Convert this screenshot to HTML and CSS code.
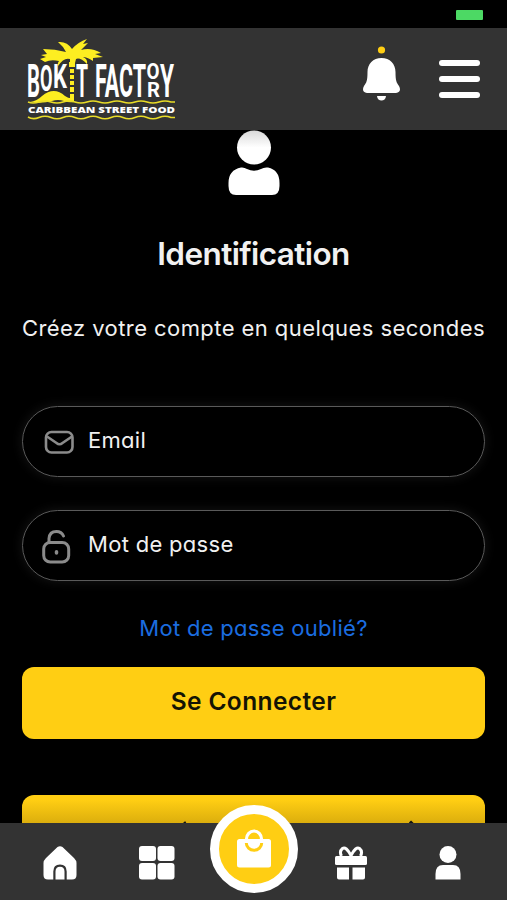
FILE: index.html
```html
<!DOCTYPE html>
<html lang="fr">
<head>
<meta charset="utf-8">
<meta name="viewport" content="width=device-width, initial-scale=1">
<title>Bokit Factory – Identification</title>
<link rel="stylesheet" href="styles.css">
</head>
<body>
<div class="app">
  <div class="status"><span class="battery"></span></div>
  <header class="header">
    <svg class="logo" width="150" height="84" viewBox="0 0 150 84">
      <g fill="#fdee21">
        <path d="M43 22Q37 20 31 29Q30 26 32 24Q24 22 18 25L13 22L19 20L14 18L20 17L16 12Q28 12 39 15Q36 9 31 5Q40 4 45 12Q51 5 60 2L56 7L61 6L54 13Q64 10 74 16L68 17L76 20L66 21L66 24Q60 20 56 20Q61 22 60 27Q53 20 49 22L48 26H43Z"/>
        <path d="M42 25h6v5h-6zM43 32h4v4h-4zM43 38h4v4h-4zM43 44h4v4h-4zM43 50h4v5h-4zM43 57h4v6h-4z"/>
        <path d="M3 65Q10 64 15 59Q27 49 38 59Q42 62 47 61V65Q42 66 37 64Q31 62 25 64Q15 67 3 65Z"/>
      </g>
      <g class="wordmark">
        <text x="0" y="60" font-size="47" textLength="13" lengthAdjust="spacingAndGlyphs">B</text>
        <text x="13" y="54" font-size="37" textLength="12.500" lengthAdjust="spacingAndGlyphs">O</text>
        <text x="26" y="51" font-size="34" textLength="14" lengthAdjust="spacingAndGlyphs">K</text>
        <text x="49" y="60" font-size="47" textLength="12" lengthAdjust="spacingAndGlyphs">T</text>
        <text x="68" y="60" font-size="47" textLength="51" lengthAdjust="spacingAndGlyphs">FACT</text>
        <text x="119.500" y="42" font-size="22" textLength="13" lengthAdjust="spacingAndGlyphs">O</text>
        <text x="120" y="60" font-size="21" textLength="13" lengthAdjust="spacingAndGlyphs">R</text>
        <text x="133" y="60" font-size="47" textLength="14" lengthAdjust="spacingAndGlyphs">Y</text>
      </g>
      <g fill="none" stroke="#e9dc27" stroke-width="1.700">
        <path d="M1 65Q6 67 12 65T24 65T36 65T48 65T60 65T72 65T84 65T96 65T108 65T120 65T132 65T144 65L148 65"/>
        <path d="M1 80Q6 83 12 80.500T24 80.500T36 80.500T48 80.500T60 80.500T72 80.500T84 80.500T96 80.500T108 80.500T120 80.500T132 80.500T144 80.500L148 80.500"/>
      </g>
      <text class="tagline" x="1" y="75.500" textLength="147" lengthAdjust="spacingAndGlyphs">CARIBBEAN STREET FOOD</text>
    </svg>
    <div class="actions">
      <svg class="bell" width="38" height="56" viewBox="0 0 38 56">
        <circle cx="18.500" cy="5" r="3.600" fill="#ffce13"/>
        <path fill="#fff" d="M18.500 13C10 13 4.500 19 4.500 27C4.500 36 3.500 37.500 1 41C-1 44.500 0 48 4 48H33C37 48 38 44.500 36 41C33.500 37.500 32.500 36 32.500 27C32.500 19 27 13 18.500 13ZM14 51H23C22.700 57 14.300 57 14 51Z"/>
      </svg>
      <div class="burger"><span></span><span></span><span></span></div>
    </div>
  </header>

  <main class="main">
    <svg class="avatar" width="52" height="66" viewBox="0 0 52 66">
      <defs><linearGradient id="shade" x1="0" y1="0" x2="0" y2="1"><stop offset="0" stop-color="#d9d9d9"/><stop offset=".5" stop-color="#fff"/></linearGradient></defs>
      <circle cx="26" cy="17.500" r="17" fill="url(#shade)"/>
      <path fill="#fff" d="M13 37.500Q16 37 19 39Q26 42.500 33 39Q36 37 40 37.500Q51.500 40 51.500 53V56Q51.500 65 44 65H8Q.5 65 .5 56V53Q.5 40 13 37.500Z"/>
    </svg>
    <h1 class="title">Identification</h1>
    <p class="intro">Créez votre compte en quelques secondes</p>
    <form class="form">
      <label class="field">
        <svg width="34" height="36" viewBox="0 0 34 36" fill="none" stroke="#8b8b8b" stroke-width="2.600">
          <rect x="5" y="8" width="26.500" height="20.500" rx="5.500"/>
          <path d="M6 12.500L15.500 19Q18.500 21.500 21.500 19L31 12.500"/>
        </svg>
        <span>Email</span>
      </label>
      <label class="field">
        <svg width="34" height="36" viewBox="0 0 34 36" fill="none" stroke="#8b8b8b" stroke-width="3" stroke-linecap="round">
          <rect x="2.700" y="14.500" width="25" height="19.500" rx="6.500"/>
          <path d="M8 14V10.500Q8.500 3.500 15.500 3.500Q20.500 3.500 22.500 8"/>
          <path d="M15.500 23.700v1.200" stroke-width="3.500"/>
        </svg>
        <span>Mot de passe</span>
      </label>
      <a class="forgot">Mot de passe oublié?</a>
      <div class="btn"><span>Se Connecter</span></div>
    </form>
    <div class="btn second">
      <svg width="463" height="72" viewBox="0 0 463 72"><path d="M162 28.500l2-1M388 26.500l5 5" fill="none" stroke="#111" stroke-width="3"/></svg>
    </div>
  </main>

  <nav class="nav">
    <svg width="34" height="34" viewBox="0 0 34 34"><path fill="#fff" d="M14.500 1Q17 -.5 19.500 1L31 12Q33.500 14.500 33.500 17V29Q33.500 33.500 29 33.500H23.700V25.500Q23.700 18.500 17 18.500T10.300 25.500V33.500H5Q.5 33.500 .5 29V17Q.5 14.500 3 12ZM12.500 33.500V25.500Q12.500 20.700 17 20.700T21.500 25.500V33.500Z"/></svg>
    <svg width="36" height="34" viewBox="0 0 36 34" fill="#fff"><rect x="0" y="0" width="17" height="15" rx="3"/><rect x="18.500" y="0" width="17" height="15" rx="3"/><rect x="0" y="17" width="17" height="16.500" rx="3"/><rect x="18.500" y="17" width="17" height="16.500" rx="3"/></svg>
    <div class="cart">
      <svg width="34" height="40" viewBox="0 0 34 40">
        <rect x="0" y="11" width="34" height="28.500" rx="2.500" fill="#fff"/>
        <path d="M9.500 11a7.500 8 0 0 1 15 0" fill="none" stroke="#fff" stroke-width="3.200"/>
        <path d="M9.300 15a7.700 7.200 0 0 0 15.400 0" fill="none" stroke="#ffce13" stroke-width="3"/>
      </svg>
    </div>
    <svg width="34" height="34" viewBox="0 0 34 34"><rect x="1" y="10" width="32" height="9" rx="1.500" fill="#fff"/><path fill="#fff" d="M3 21.500H15V33.500H5Q3 33.500 3 31.500ZM18.500 21.500H31V31.500Q31 33.500 29 33.500H18.500Z"/><path d="M7.500 10Q5 5.500 8.500 2.500Q12 0 17 9.500Q22 0 25.500 2.500Q29 5.500 26.500 10" fill="none" stroke="#fff" stroke-width="3"/></svg>
    <svg width="26" height="34" viewBox="0 0 26 34" fill="#fff"><circle cx="13" cy="8.500" r="8.500"/><path d="M.5 33.500V28Q.5 19 8 19H18Q25.500 19 25.500 28V33.500Z"/></svg>
  </nav>
</div>
</body>
</html>
```

FILE: styles.css
```css
* { box-sizing: border-box; }

body {
  margin: 0;
  background: #000;
  color: #f1f1f1;
  font-family: Inter, "Open Sans", sans-serif;
}

.app {
  display: flex;
  flex-direction: column;
  height: 900px;
  overflow: hidden;
}

.status {
  flex: none;
  display: flex;
  justify-content: flex-end;
  height: 28px;
  padding: 10px 24px 0 0;
}

.battery {
  width: 27px;
  height: 10px;
  border-radius: 1px;
  background: #4cd964;
}

.header {
  flex: none;
  display: flex;
  justify-content: space-between;
  height: 102px;
  padding: 9px 27px 0 27px;
  background: #333;
}

.logo { overflow: visible; }

.wordmark {
  font-family: Roboto, sans-serif;
  font-weight: 700;
  fill: #fff;
}

.tagline {
  font-family: "Open Sans", sans-serif;
  font-size: 9.500px;
  font-weight: 800;
  fill: #fff;
}

.actions {
  display: flex;
  gap: 38px;
}

.bell { margin-top: 8px; }

.burger {
  display: flex;
  flex-direction: column;
  gap: 10px;
  padding-top: 23px;
}

.burger span {
  width: 41px;
  height: 6px;
  border-radius: 3px;
  background: #fff;
}

.main {
  flex: 1;
  min-height: 0;
  overflow: hidden;
  display: flex;
  flex-direction: column;
  align-items: center;
  padding: 0 22px;
}

.avatar { flex: none; }

.title {
  flex: none;
  margin: 38px 0 0;
  font-size: 31.500px;
  font-weight: 600;
  line-height: 40px;
  letter-spacing: -0.6px;
}

.intro {
  flex: none;
  margin: 38px -10px 0;
  font-size: 22px;
  font-feature-settings: "cv11";
  letter-spacing: 0.430px;
  line-height: 32px;
  white-space: nowrap;
}

.form {
  flex: none;
  display: flex;
  flex-direction: column;
  width: 463px;
  margin-top: 62px;
  font-feature-settings: "cv11";
}

.field {
  display: flex;
  align-items: center;
  gap: 13px;
  height: 71px;
  margin-bottom: 33px;
  padding-left: 18px;
  border: 1.500px solid #5a5a5a;
  border-radius: 36px;
  box-shadow: 0 0 12px #161616;
  font-size: 22px;
  letter-spacing: 0.300px;
}

.field span { margin-top: -3px; }

.forgot {
  align-self: center;
  margin: -2px 0 23px;
  font-size: 22px;
  letter-spacing: 0.300px;
  line-height: 32px;
  color: #1b6de0;
}

.btn {
  flex: none;
  display: flex;
  justify-content: center;
  width: 463px;
  height: 72px;
  border-radius: 12px;
  background: #ffce13;
  color: #141404;
  font-size: 24.500px;
  font-weight: 600;
  letter-spacing: 0.400px;
  line-height: 69px;
}

.second {
  margin-top: 56px;
  background: linear-gradient(#ffce13 5px, #dcae0d 28px);
}

.nav {
  flex: none;
  display: grid;
  grid-template-columns: repeat(5, 97px);
  justify-content: center;
  justify-items: center;
  align-items: start;
  height: 77px;
  padding-top: 23px;
  background: #333;
}

.cart {
  display: flex;
  align-items: center;
  justify-content: center;
  width: 88px;
  height: 88px;
  margin-top: -41px;
  padding-bottom: 3px;
  border: 9px solid #fff;
  border-radius: 50%;
  background: #ffce13;
}
```
